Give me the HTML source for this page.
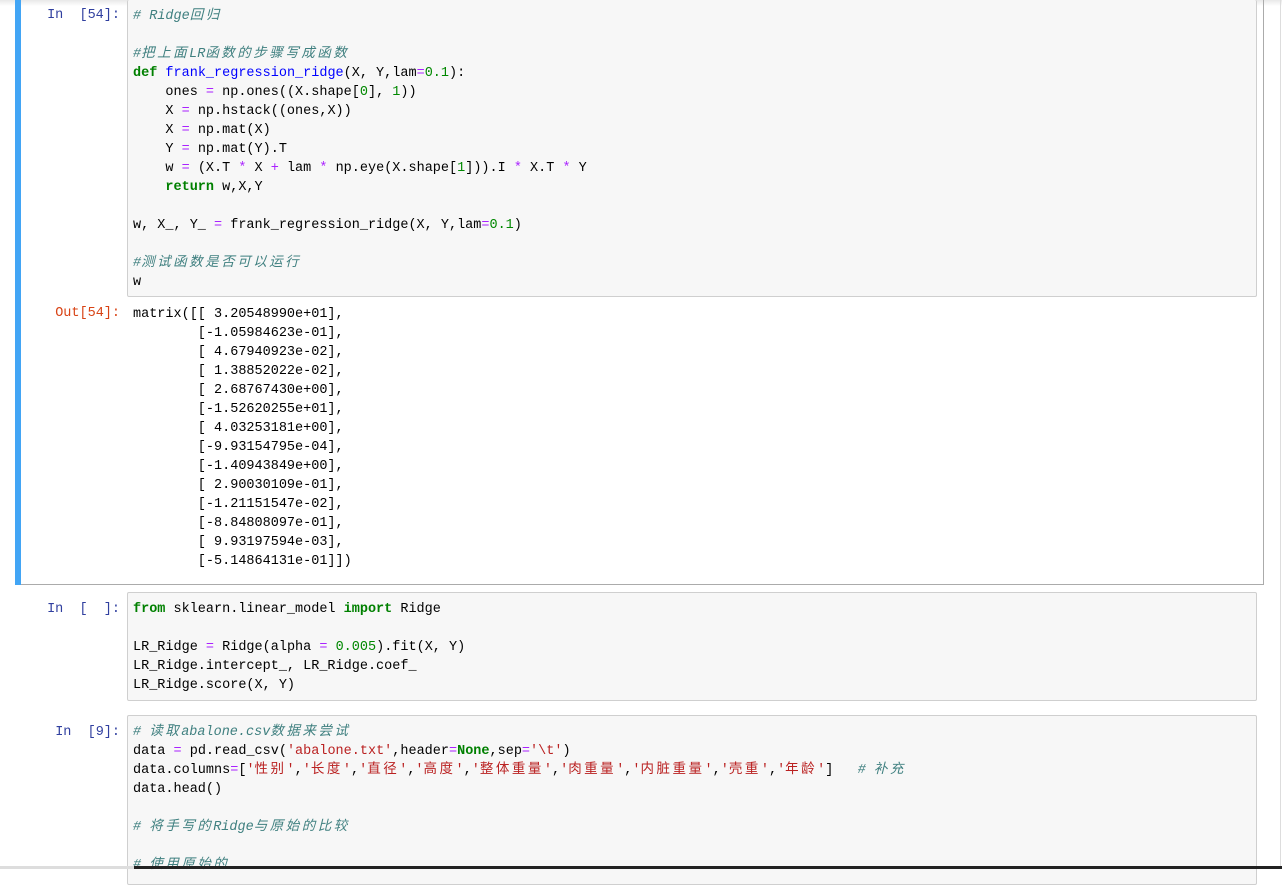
<!DOCTYPE html>
<html><head><meta charset="utf-8"><style>
body{margin:0;width:1282px;height:869px;overflow:hidden;background:#fff;position:relative;font-family:"Liberation Mono","Noto Sans CJK SC",monospace;font-size:13.5px;}
.abs{position:absolute}
pre{margin:0;font-family:inherit;font-size:13.5px;line-height:19px;color:#000;white-space:pre}
.inbox{background:#f7f7f7;border:1px solid #cfcfcf;border-radius:2px;box-sizing:border-box}
.p{color:#303f9f;text-align:right;width:110px;line-height:19px}
.o{color:#d84315}
.k{color:#008000;font-weight:bold}
.f{color:#0000ff}
.c{color:#408080;font-style:italic}
.n{color:#080}
.op{color:#aa22ff}
.s{color:#ba2121}
.z{letter-spacing:2.5px}
</style></head><body>
<div class="abs" style="left:0;top:0;width:1282px;height:6px;background:linear-gradient(#e8e8e8,#fff)"></div>
<div class="abs" style="left:1280px;top:0;width:1px;height:869px;background:#ddd"></div>
<!-- cell 1 -->
<div class="abs" style="left:15px;top:0;width:1249px;height:585px;border:1px solid #ababab;border-top:none;box-sizing:border-box;border-left:none"></div>
<div class="abs" style="left:15px;top:0;width:6px;height:585px;background:#42a5f5"></div>
<div class="abs p" style="left:10px;top:6px">In&nbsp;&nbsp;[54]:</div>
<div class="abs inbox" style="left:127px;top:0;width:1130px;height:297px;border-top:none"></div>
<pre class="abs" style="left:133px;top:7px"><span class="c"># Ridge<span class="z">回归</span></span>

<span class="c">#<span class="z">把上面</span>LR<span class="z">函数的步骤写成函数</span></span>
<span class="k">def</span> <span class="f">frank_regression_ridge</span>(X, Y,lam<span class="op">=</span><span class="n">0.1</span>):
    ones <span class="op">=</span> np.ones((X.shape[<span class="n">0</span>], <span class="n">1</span>))
    X <span class="op">=</span> np.hstack((ones,X))
    X <span class="op">=</span> np.mat(X)
    Y <span class="op">=</span> np.mat(Y).T
    w <span class="op">=</span> (X.T <span class="op">*</span> X <span class="op">+</span> lam <span class="op">*</span> np.eye(X.shape[<span class="n">1</span>])).I <span class="op">*</span> X.T <span class="op">*</span> Y
    <span class="k">return</span> w,X,Y

w, X_, Y_ <span class="op">=</span> frank_regression_ridge(X, Y,lam<span class="op">=</span><span class="n">0.1</span>)

<span class="c">#<span class="z">测试函数是否可以运行</span></span>
w</pre>
<div class="abs p o" style="left:10px;top:304px">Out[54]:</div>
<pre class="abs" style="left:133px;top:305px">matrix([[ 3.20548990e+01],
        [-1.05984623e-01],
        [ 4.67940923e-02],
        [ 1.38852022e-02],
        [ 2.68767430e+00],
        [-1.52620255e+01],
        [ 4.03253181e+00],
        [-9.93154795e-04],
        [-1.40943849e+00],
        [ 2.90030109e-01],
        [-1.21151547e-02],
        [-8.84808097e-01],
        [ 9.93197594e-03],
        [-5.14864131e-01]])</pre>
<!-- cell 2 -->
<div class="abs p" style="left:10px;top:600px">In&nbsp;&nbsp;[&nbsp;&nbsp;]:</div>
<div class="abs inbox" style="left:127px;top:592px;width:1130px;height:109px"></div>
<pre class="abs" style="left:133px;top:600px"><span class="k">from</span> sklearn.linear_model <span class="k">import</span> Ridge

LR_Ridge <span class="op">=</span> Ridge(alpha <span class="op">=</span> <span class="n">0.005</span>).fit(X, Y)
LR_Ridge.intercept_, LR_Ridge.coef_
LR_Ridge.score(X, Y)</pre>
<!-- cell 3 -->
<div class="abs p" style="left:10px;top:723px">In&nbsp;&nbsp;[9]:</div>
<div class="abs inbox" style="left:127px;top:715px;width:1130px;height:170px"></div>
<pre class="abs" style="left:133px;top:723px"><span class="c"># <span class="z">读取</span>abalone.csv<span class="z">数据来尝试</span></span>
data <span class="op">=</span> pd.read_csv(<span class="s">'abalone.txt'</span>,header<span class="op">=</span><span class="k">None</span>,sep<span class="op">=</span><span class="s">'\t'</span>)
data.columns<span class="op">=</span>[<span class="s">'<span class="z">性别</span>'</span>,<span class="s">'<span class="z">长度</span>'</span>,<span class="s">'<span class="z">直径</span>'</span>,<span class="s">'<span class="z">高度</span>'</span>,<span class="s">'<span class="z">整体重量</span>'</span>,<span class="s">'<span class="z">肉重量</span>'</span>,<span class="s">'<span class="z">内脏重量</span>'</span>,<span class="s">'<span class="z">壳重</span>'</span>,<span class="s">'<span class="z">年龄</span>'</span>]   <span class="c"># <span class="z">补充</span></span>
data.head()

<span class="c"># <span class="z">将手写的</span>Ridge<span class="z">与原始的比较</span></span>

<span class="c"># <span class="z">使用原始的</span></span></pre>
<div class="abs" style="left:0;top:866px;width:1282px;height:3px;background:#ddd"></div>
<div class="abs" style="left:134px;top:866px;width:1148px;height:3px;background:#222"></div>
</body></html>
